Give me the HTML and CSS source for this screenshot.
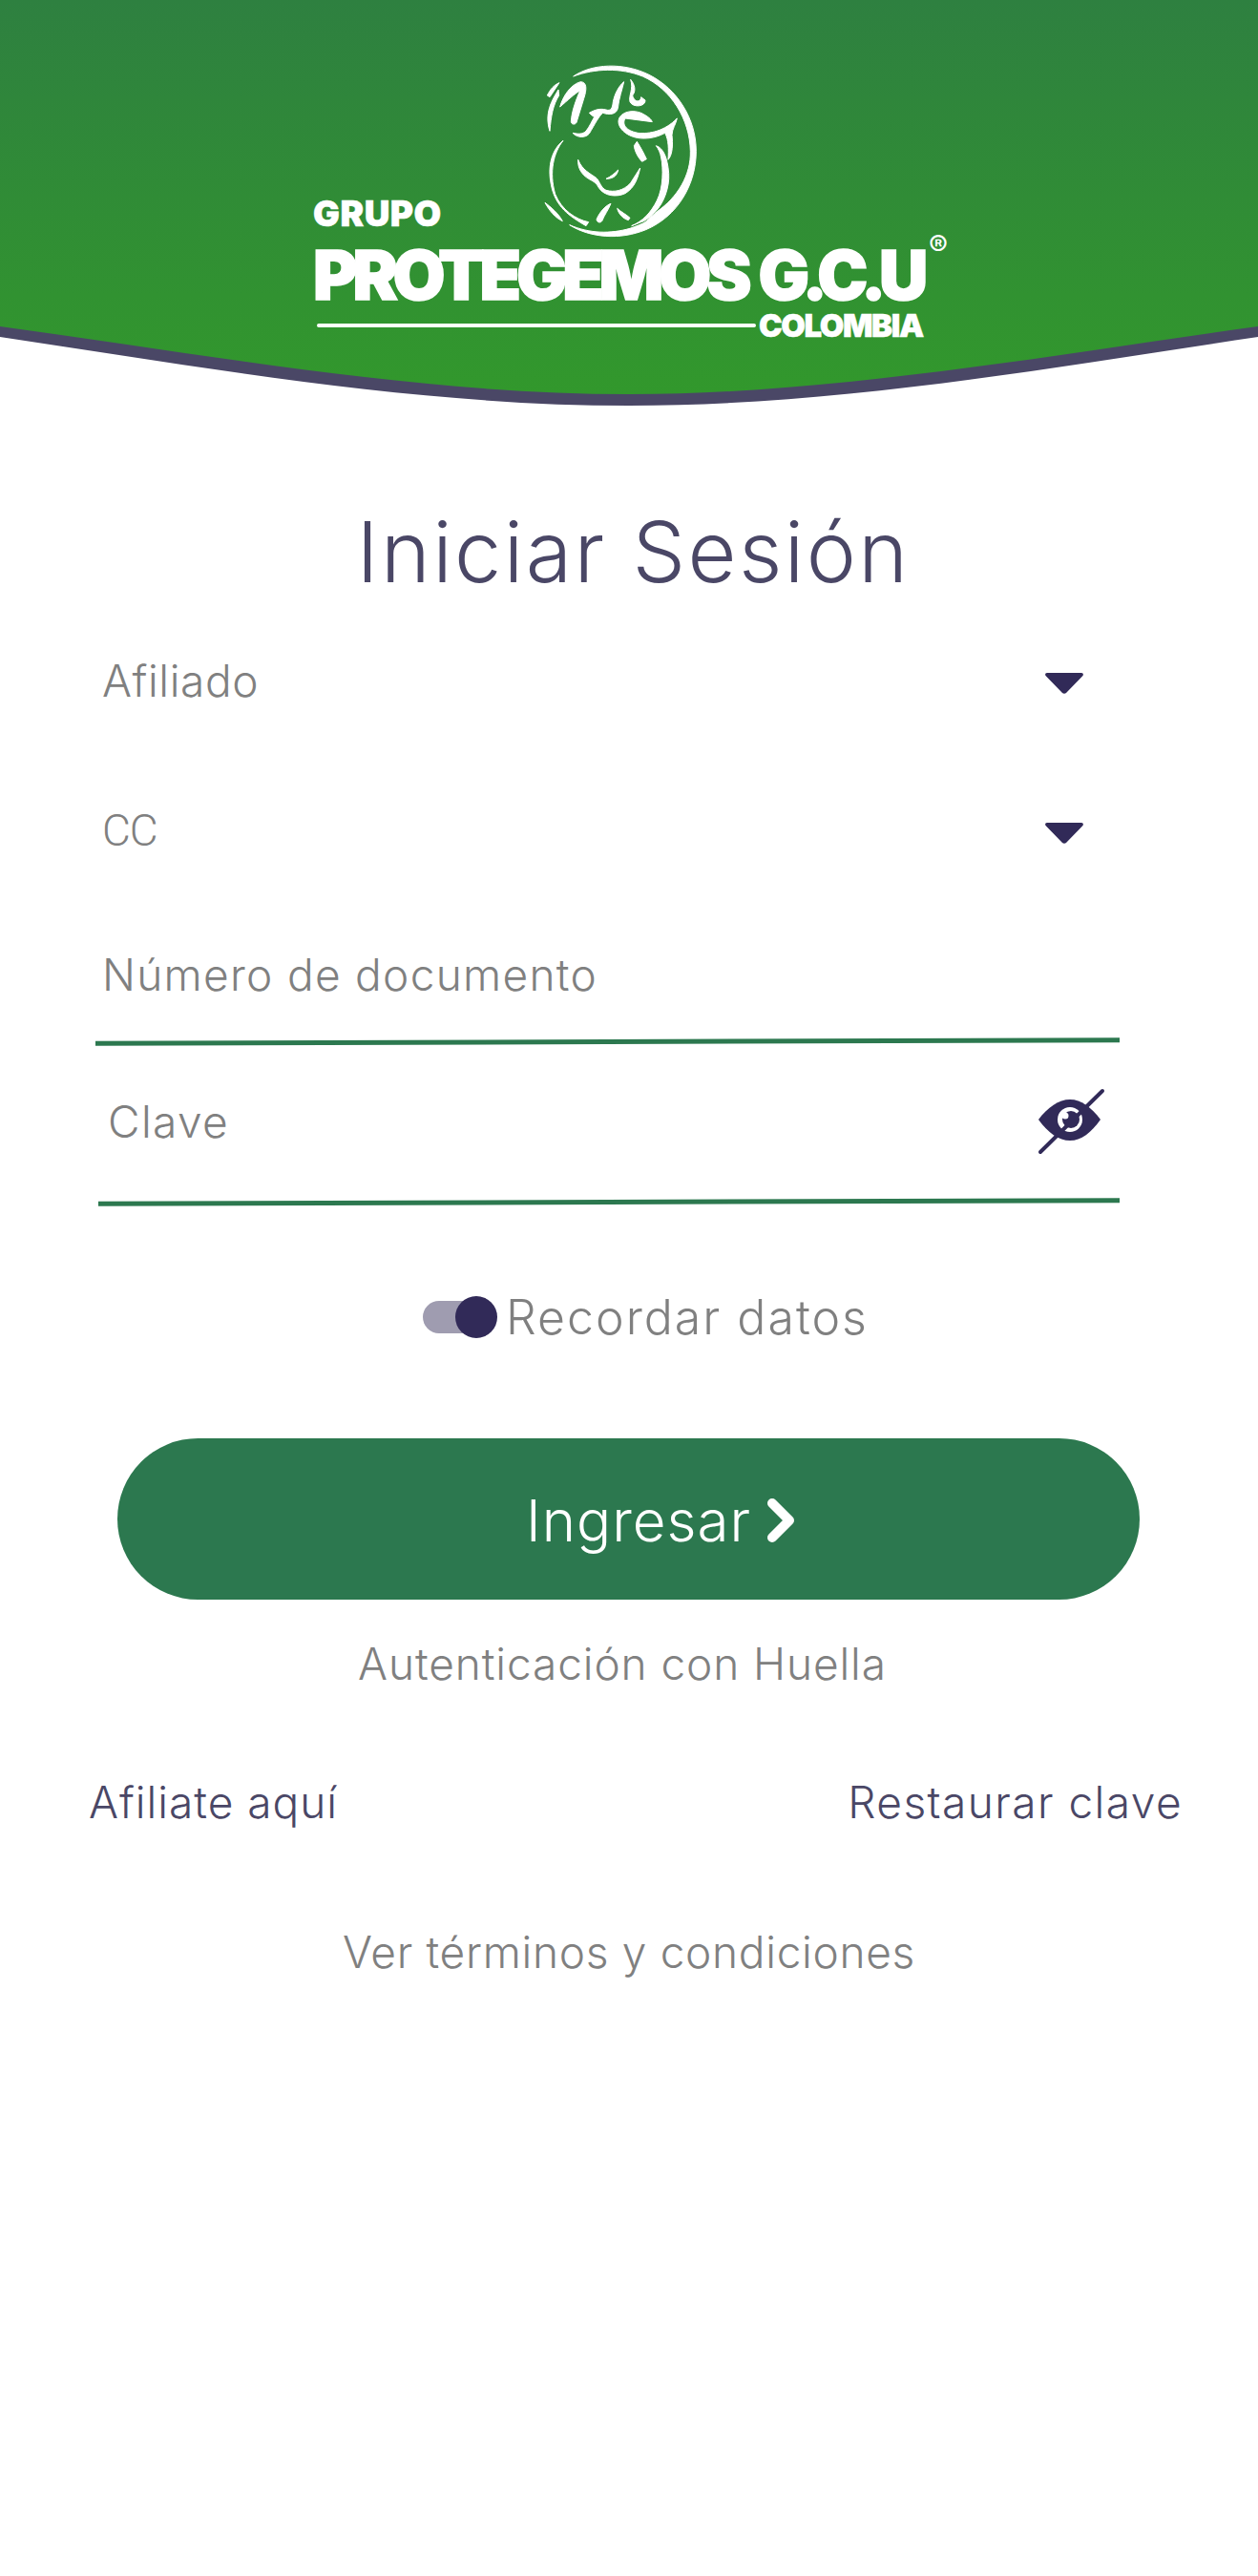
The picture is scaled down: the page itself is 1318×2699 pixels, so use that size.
FILE: index.html
```html
<!DOCTYPE html>
<html lang="es">
<head>
<meta charset="utf-8">
<title>Iniciar Sesión</title>
<link rel="stylesheet" href="styles.css">
</head>
<body>
<header class="hero">
  <svg class="hero-bg" viewBox="0 0 1318 426" aria-hidden="true">
    <defs>
      <linearGradient id="heroGrad" x1="0" y1="0" x2="0" y2="1">
        <stop offset="0" stop-color="#2e8040"/>
        <stop offset="1" stop-color="#32982c"/>
      </linearGradient>
    </defs>
    <path fill="#4a4766" d="M0 340H1318V353C1098 386 878 425 659 425C440 425 220 386 0 353Z"/>
    <path fill="url(#heroGrad)" d="M0 0H1318V342C1098 372 878 413 659 413C440 413 220 372 0 342Z"/>
  </svg>
  <div class="logo">
    <div class="logo-top">
      <span class="logo-grupo">GRUPO</span>
      <svg class="logo-bull" viewBox="0 0 660 600" aria-hidden="true">
        <g fill="#fff" stroke="#fff" stroke-width="3" stroke-linejoin="round">
          <path d="M182 90C240 50 340 45 420 85C510 130 568 225 568 325C568 430 510 530 410 572C330 605 235 598 170 557C235 585 300 585 360 568C375 562 400 555 412 545C420 535 430 528 445 515C510 470 552 400 550 325C548 225 490 130 400 90C330 62 250 65 182 90Z"/>
          <path d="M100 150C110 130 120 118 138 110C128 125 118 140 108 155Z"/>
          <path d="M135 132C115 165 90 205 108 262C112 215 118 180 137 150Z"/>
          <path d="M140 186C150 150 175 115 205 107C225 108 225 130 215 160L192 235C188 243 175 242 175 232C177 200 190 165 203 135C185 145 165 165 140 186Z"/>
          <path d="M232 205C250 195 265 190 285 195C300 200 305 190 307 170C312 145 325 120 341 107C336 130 325 160 322 190C318 210 295 212 275 205C262 215 250 240 232 270C222 283 195 285 180 268C197 272 212 272 222 262C235 245 240 230 248 218C242 214 236 210 232 205Z"/>
          <path d="M362 100C375 115 380 135 368 150C375 175 395 170 395 155L408 165C410 185 370 190 360 170C355 150 372 130 362 100Z"/>
          <path d="M430 233L345 222C335 240 345 260 385 268C420 272 470 262 508 222C505 240 492 255 492 275C495 300 495 335 480 352C482 320 482 290 470 268C440 285 400 290 370 280C335 268 315 240 328 218C340 200 370 195 395 205C405 210 425 220 430 233Z"/>
          <path d="M382 295C395 315 405 335 412 350L398 358C385 345 375 325 373 308Z"/>
          <path d="M150 292C120 330 105 390 125 460C145 510 190 540 230 548L222 560C170 530 125 500 112 430C100 370 115 320 150 292Z"/>
          <path d="M197 352C210 385 235 395 255 410C265 420 268 440 285 448C310 455 340 450 362 425L392 378C385 410 375 440 345 458C320 470 280 468 262 440C255 425 245 420 230 412C210 400 195 380 197 352Z"/>
          <path d="M285 412C300 405 312 395 323 384C320 400 310 412 285 412Z"/>
          <path d="M442 308C465 315 478 345 482 395C485 440 465 490 440 515C430 525 410 545 395 548L365 560C400 545 425 520 445 480C465 440 465 380 458 345C455 330 450 318 442 308Z"/>
          <path d="M93 487C110 500 135 520 148 545C125 535 105 510 93 487Z"/>
          <path d="M300 490C285 495 265 515 255 540C258 552 268 550 272 545C280 525 292 510 300 490Z"/>
          <path d="M320 505C330 515 350 525 360 535L355 542C340 538 325 525 320 505Z"/>
        </g>
      </svg>
    </div>
    <div class="logo-name"><span class="logo-word">PROTEGEMOS</span> <span class="logo-initials">G.C.U</span></div>
    <span class="logo-reg">®</span>
    <div class="logo-bottom">
      <span class="logo-rule"></span>
      <span class="logo-country">COLOMBIA</span>
    </div>
  </div>
</header>

<main class="login">
  <h1 class="title">Iniciar Sesión</h1>

  <div class="select select-first">
    <span class="label label-afiliado">Afiliado</span>
    <svg class="caret" viewBox="0 0 40 22" aria-hidden="true"><path fill="#312a58" d="M2 0H38C40 0 40.500 2 39 3.500L22 21C21 22 19 22 18 21L1 3.500C-.5 2 0 0 2 0Z"/></svg>
  </div>
  <div class="select select-second">
    <span class="label label-mono">CC</span>
    <svg class="caret" viewBox="0 0 40 22" aria-hidden="true"><path fill="#312a58" d="M2 0H38C40 0 40.500 2 39 3.500L22 21C21 22 19 22 18 21L1 3.500C-.5 2 0 0 2 0Z"/></svg>
  </div>

  <div class="field field-doc">
    <span class="label label-doc">Número de documento</span>
  </div>
  <div class="rule rule-doc"></div>

  <div class="field field-key">
    <span class="label label-key">Clave</span>
    <svg class="eye" viewBox="0 0 75 70" aria-hidden="true">
      <path fill="#312a58" d="M3 33C13 20 24 12 36 12C48 12 58 20 68 33C58 47 48 55 36 55C24 55 13 47 3 33Z"/>
      <circle cx="36" cy="33" r="13" fill="#fff"/>
      <circle cx="37" cy="33" r="9" fill="#312a58"/>
      <circle cx="31" cy="29" r="3.500" fill="#fff"/>
      <path stroke="#312a58" stroke-width="4" stroke-linecap="round" fill="none" d="M5 67L70 3"/>
    </svg>
  </div>
  <div class="rule rule-key"></div>

  <div class="remember">
    <span class="toggle"><span class="toggle-knob"></span></span>
    <span class="remember-text">Recordar datos</span>
  </div>

  <button class="submit" type="button">
    <span>Ingresar</span>
    <svg class="submit-chevron" viewBox="0 0 28 46" aria-hidden="true"><path fill="none" stroke="#fff" stroke-width="10" stroke-linecap="round" stroke-linejoin="round" d="M5 5L23 23L5 41"/></svg>
  </button>

  <p class="fingerprint">Autenticación con Huella</p>

  <div class="links">
    <a class="link link-join">Afiliate aquí</a>
    <a class="link link-reset">Restaurar clave</a>
  </div>

  <p class="terms">Ver términos y condiciones</p>
</main>
</body>
</html>
```

FILE: styles.css
```css
* { box-sizing: border-box; }

html, body {
  margin: 0;
  padding: 0;
  background: #fff;
}

body {
  width: 1318px;
  height: 2699px;
  overflow: hidden;
  font-family: Inter, "Noto Sans", sans-serif;
  font-weight: 300;
  color: #808080;
}

/* Header */
.hero {
  position: relative;
  height: 426px;
}

.hero-bg {
  position: absolute;
  inset: 0;
  width: 1318px;
  height: 426px;
  display: block;
}

.logo {
  position: relative;
  margin-left: 328px;
  width: 680px;
  padding-top: 50px;
  color: #fff;
  font-weight: 900;
}

.logo-top {
  display: flex;
  align-items: flex-end;
  height: 200px;
}

.logo-grupo {
  width: 212px;
  height: 40px;
  line-height: 40px;
  margin-bottom: 6px;
  font-size: 37px;
  letter-spacing: 0.500px;
  -webkit-text-stroke: 0.500px #fff;
}

.logo-bull {
  width: 220px;
  height: 200px;
  display: block;
}

.logo-name {
  height: 76px;
  line-height: 76px;
  font-size: 71px;
  letter-spacing: -2px;
  white-space: nowrap;
  -webkit-text-stroke: 1.500px #fff;
}

.logo-word { letter-spacing: -5.200px; }
.logo-initials { letter-spacing: -7.500px; }

.logo-reg {
  position: absolute;
  left: 645px;
  top: 242px;
  line-height: 30px;
  font-size: 30px;
  font-weight: 500;
}

.logo-bottom {
  display: flex;
  align-items: center;
  margin-left: 4px;
  height: 30px;
}

.logo-rule {
  width: 460px;
  height: 4px;
  border-radius: 2px;
  background: #fff;
}

.logo-country {
  margin-left: 3px;
  font-size: 33px;
  line-height: 30px;
  letter-spacing: -1.400px;
  -webkit-text-stroke: 0.500px #fff;
}

/* Form */
.login {
  display: flex;
  flex-direction: column;
}

.title {
  margin: 102px 0 0;
  padding-left: 9px;
  height: 100px;
  line-height: 100px;
  text-align: center;
  font-size: 88px;
  font-weight: 300;
  letter-spacing: 2.400px;
  color: #4a4766;
}

.label {
  font-size: 46px;
  line-height: 60px;
  color: #808080;
}

.label-afiliado { letter-spacing: 0.600px; }
.label-doc { letter-spacing: 1.300px; }
.label-key { letter-spacing: 1.400px; }

.label-mono {
  font-family: Roboto, sans-serif;
  font-size: 46px;
  font-weight: 300;
  letter-spacing: -1px;
  color: #808080;
}

.select {
  display: flex;
  align-items: center;
  justify-content: space-between;
  height: 60px;
  padding-left: 107px;
}

.select-first {
  margin-top: 55px;
  padding-right: 183px;
}

.select-second {
  margin-top: 97px;
  padding-right: 183px;
}

.caret {
  width: 40px;
  height: 22px;
  margin-top: 6px;
  display: block;
}

.field {
  display: flex;
  align-items: center;
  justify-content: space-between;
  height: 60px;
}

.field-doc {
  margin-top: 91px;
  padding-left: 107px;
}

.rule {
  height: 5px;
  background: #2c784f;
  transform: rotate(-0.2deg);
}

.rule-doc {
  margin: 38px 145px 0 100px;
}

.field-key {
  margin-top: 51px;
  padding-left: 113px;
  padding-right: 158px;
}

.eye {
  width: 75px;
  height: 70px;
  display: block;
  flex: none;
}

.rule-key {
  margin: 52px 145px 0 103px;
}

.remember {
  display: flex;
  align-items: center;
  margin-top: 88px;
  margin-left: 443px;
  height: 60px;
}

.toggle {
  position: relative;
  display: block;
  width: 76px;
  height: 34px;
  border-radius: 17px;
  background: #9f9cb0;
}

.toggle-knob {
  position: absolute;
  right: -2px;
  top: -5px;
  width: 44px;
  height: 44px;
  border-radius: 50%;
  background: #312a58;
}

.remember-text {
  margin-left: 11px;
  font-size: 50px;
  line-height: 60px;
  letter-spacing: 2px;
  color: #808080;
}

.submit {
  display: flex;
  align-items: center;
  justify-content: center;
  gap: 17px;
  margin: 97px 0 0 123px;
  width: 1071px;
  height: 169px;
  padding: 2px 0 0 66px;
  border: 0;
  border-radius: 85px;
  background: #2c784f;
  color: #fff;
  font-family: inherit;
  font-size: 60px;
  font-weight: 300;
  letter-spacing: 1px;
}

.submit-chevron {
  width: 28px;
  height: 46px;
  display: block;
}

.fingerprint {
  margin: 37px 0 0;
  padding-right: 14px;
  height: 60px;
  line-height: 60px;
  text-align: center;
  font-size: 46px;
  letter-spacing: 0.900px;
}

.links {
  display: flex;
  justify-content: space-between;
  margin-top: 85px;
  padding: 0 79px 0 93px;
  height: 60px;
}

.link {
  font-size: 46px;
  line-height: 60px;
  color: #4a4766;
}

.link-join { letter-spacing: 1px; }
.link-reset { letter-spacing: 1.450px; }

.terms {
  margin: 97px 0 0;
  height: 60px;
  line-height: 60px;
  text-align: center;
  font-size: 46px;
  letter-spacing: 0.700px;
}
```
